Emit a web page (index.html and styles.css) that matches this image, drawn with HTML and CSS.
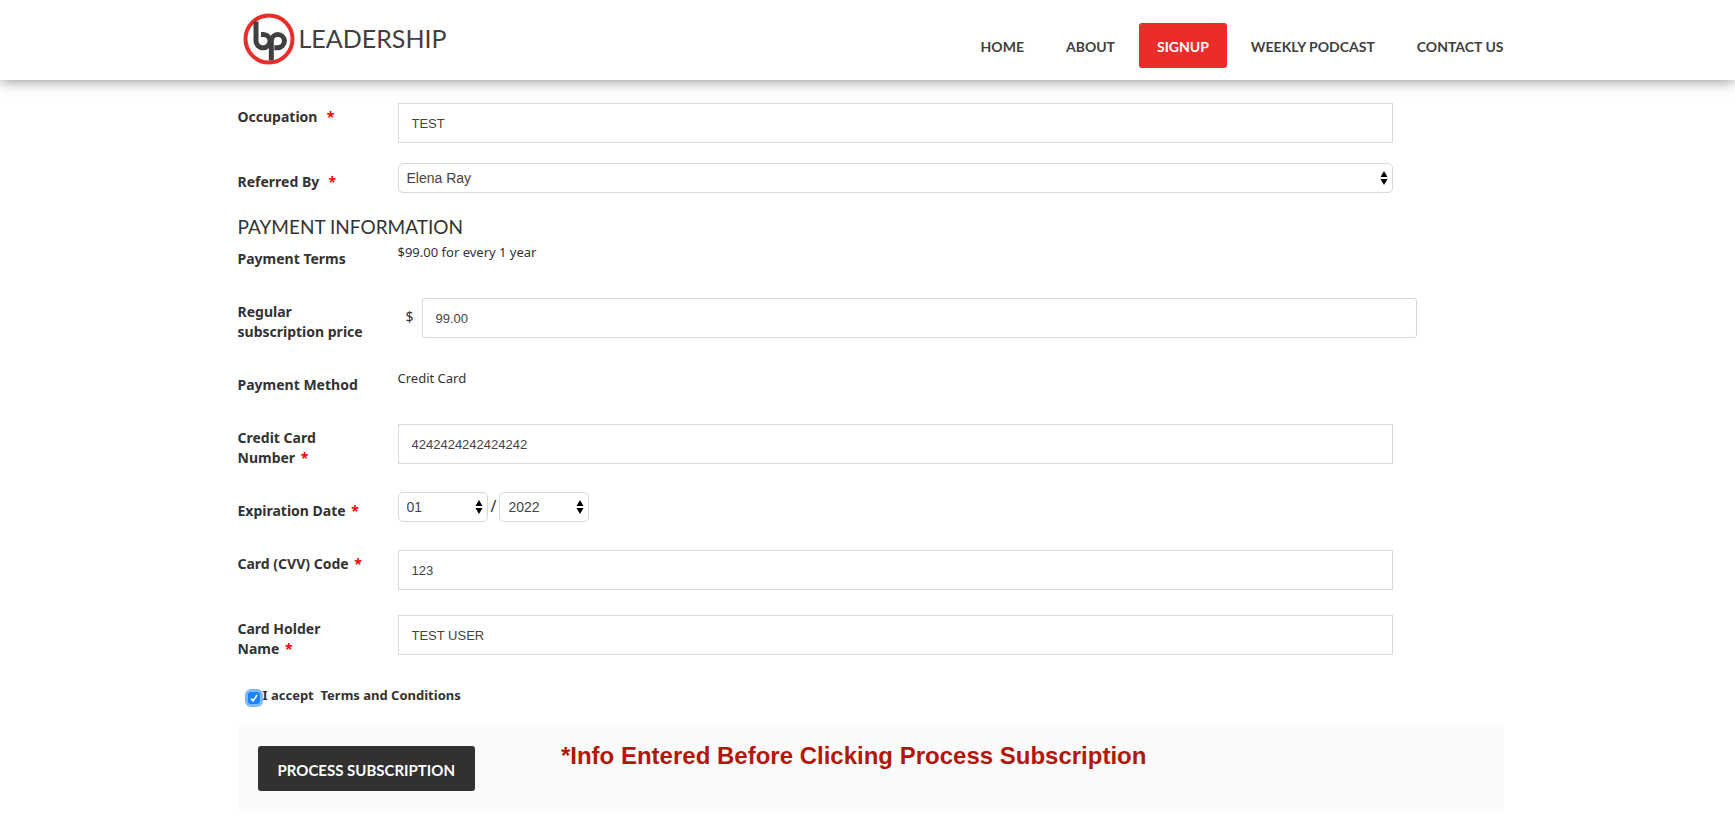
FILE: index.html
```html
<!DOCTYPE html>
<html lang="en">
<head>
    <meta charset="UTF-8">
    <meta name="viewport" content="width=device-width, initial-scale=1.0">
    <title>BP Leadership - Signup</title>
    <link rel="stylesheet" href="styles.css">
</head>
<body>

<header class="site-header">
    <div class="container header-inner">
        <a href="#" class="logo">
            <svg class="logo-mark" viewBox="0 0 52 52" width="52" height="52" aria-hidden="true">
                <circle cx="26" cy="26" r="23.5" fill="#fff" stroke="#ea2d2a" stroke-width="4"/>
                <g fill="none" stroke="#404040" stroke-width="5">
                    <path d="M13 8.500V28a6.700 6.700 0 0 0 6.700 6.700h.6a6.700 6.700 0 0 0 6.700-6.700 6.700 6.700 0 0 0-6.700-6.500h-2.300"/>
                    <path d="M28.300 47.500V28a6.500 6.500 0 0 1 6.500-6.500 6.500 6.500 0 0 1 0 13.200h-3.500"/>
                </g>
            </svg>
            <span class="logo-text">LEADERSHIP</span>
        </a>
        <nav class="main-nav">
            <a href="#">Home</a>
            <a href="#">About</a>
            <a href="#" class="active">Signup</a>
            <a href="#">Weekly Podcast</a>
            <a href="#">Contact Us</a>
        </nav>
    </div>
</header>

<main class="container">
    <form class="signup-form">
        <div class="row">
            <label class="row-label" for="occupation">Occupation&nbsp; <span class="required">*</span></label>
            <div class="row-field"><input type="text" class="text-input" id="occupation" value="TEST"></div>
        </div>
        <div class="row">
            <label class="row-label" for="referredBy">Referred By&nbsp; <span class="required">*</span></label>
            <div class="row-field select-field">
                <select class="select-input" id="referredBy">
                    <option>Elena Ray</option>
                </select>
            </div>
        </div>

        <h2 class="section-title">Payment Information</h2>

        <div class="row">
            <span class="row-label">Payment Terms</span>
            <div class="row-field value-field">$99.00 for every 1 year</div>
        </div>
        <div class="row">
            <label class="row-label" for="price">Regular subscription price</label>
            <div class="row-field price-field">
                <span class="currency">$</span>
                <input type="text" class="text-input" id="price" value="99.00">
            </div>
        </div>
        <div class="row">
            <span class="row-label">Payment Method</span>
            <div class="row-field value-field">Credit Card</div>
        </div>
        <div class="row">
            <label class="row-label" for="cardNumber">Credit Card<br>Number <span class="required">*</span></label>
            <div class="row-field"><input type="text" class="text-input" id="cardNumber" value="4242424242424242"></div>
        </div>
        <div class="row">
            <label class="row-label" for="expMonth">Expiration Date <span class="required">*</span></label>
            <div class="row-field select-field">
                <select class="select-input small" id="expMonth">
                    <option>01</option>
                </select>
                <span class="slash">/</span>
                <select class="select-input small" id="expYear" aria-label="Expiration year">
                    <option>2022</option>
                </select>
            </div>
        </div>
        <div class="row">
            <label class="row-label" for="cvv">Card (CVV) Code <span class="required">*</span></label>
            <div class="row-field"><input type="text" class="text-input" id="cvv" value="123"></div>
        </div>
        <div class="row">
            <label class="row-label" for="cardHolder">Card Holder<br>Name <span class="required">*</span></label>
            <div class="row-field"><input type="text" class="text-input" id="cardHolder" value="TEST USER"></div>
        </div>

        <div class="terms">
            <input type="checkbox" class="terms-check" id="terms" checked>
            <label for="terms">I accept&nbsp; Terms and Conditions</label>
        </div>

        <div class="form-footer">
            <button type="submit" class="submit-btn">Process Subscription</button>
            <p class="notice">*Info Entered Before Clicking Process Subscription</p>
        </div>
    </form>
</main>

</body>
</html>
```
FILE: styles.css
```css
* {
    box-sizing: border-box;
}
body {
    margin: 0;
    background-color: #fff;
    color: #333;
    font-family: "Noto Sans", sans-serif;
    font-size: 14px;
    line-height: 20px;
}
.container {
    max-width: 1280px;
    margin: 0 auto;
    padding: 0 4px 0 10px;
}

/* Header */
.site-header {
    background-color: #fff;
    box-shadow: 0 0 14px rgba(0, 0, 0, 0.5);
}
.header-inner {
    display: flex;
    justify-content: space-between;
    height: 80px;
}
.logo {
    display: flex;
    align-items: center;
    gap: 4px;
    padding: 0 0 2px 5px;
    color: #404040;
    text-decoration: none;
}
.logo-text {
    padding-bottom: 2px;
    font-family: Lato, sans-serif;
    font-size: 25px;
    line-height: 32px;
}
.main-nav {
    display: flex;
    gap: 6px;
    padding-top: 23px;
}
.main-nav a {
    height: 45px;
    padding: 0 18px;
    border-radius: 3px;
    color: #404040;
    font-family: Lato, sans-serif;
    font-size: 14px;
    font-weight: 700;
    line-height: 48px;
    text-decoration: none;
    text-transform: uppercase;
}
.main-nav a:last-child {
    padding-right: 0;
}
.main-nav a.active {
    background-color: #ea2d2a;
    color: #fff;
}

/* Form */
.signup-form {
    padding-top: 17px;
}
.row {
    display: flex;
    gap: 30px;
    padding-right: 111px;
}
.row-label {
    flex: 0 0 130px;
    padding: 10px 0 23px;
    font-weight: 700;
}
.required {
    margin-left: 2px;
    color: #f00;
}
.row-field {
    flex: 1;
    padding: 6px 0 19px;
}
.select-field {
    display: flex;
    gap: 3px;
    padding-top: 1px;
}
.value-field {
    padding-top: 3px;
    font-size: 13px;
}
.price-field {
    display: flex;
    margin-right: -24px;
}
.currency {
    flex: 0 0 24px;
    padding: 9px 0 0 8px;
}
.text-input {
    display: block;
    width: 100%;
    height: 40px;
    padding: 0 13px;
    border: 1px solid #d9d9d9;
    background-color: #fff;
    color: #444;
    font-family: "Liberation Sans", Arial, sans-serif;
    font-size: 13px;
}
.price-field .text-input {
    flex: 1;
    border-radius: 3px;
}
.select-input {
    appearance: none;
    width: 100%;
    height: 30px;
    padding: 0 20px 0 8px;
    border: 1px solid #d9d9d9;
    border-radius: 5px;
    background: #fff url("data:image/svg+xml,%3Csvg xmlns='http://www.w3.org/2000/svg' width='8' height='14'%3E%3Cpath d='M4 0l3.500 6h-7zM4 14l3.500-6h-7z'/%3E%3C/svg%3E") no-repeat right 4px center;
    color: #444;
    font-family: "Liberation Sans", Arial, sans-serif;
    font-size: 14px;
}
.select-input.small {
    width: 90px;
}
.slash {
    padding-top: 4px;
    font-size: 16px;
}
.section-title {
    margin: 0;
    font-family: Lato, sans-serif;
    font-size: 19px;
    font-weight: 400;
    line-height: 24px;
    text-transform: uppercase;
}

/* Terms */
.terms {
    display: flex;
    height: 45px;
    padding: 3px 0 0 9px;
    font-size: 13px;
    font-weight: 700;
}
.terms-check {
    appearance: none;
    width: 12px;
    height: 12px;
    margin: 7px 3px 0 1px;
    border-radius: 3px;
    background: #1a82fb url("data:image/svg+xml,%3Csvg xmlns='http://www.w3.org/2000/svg' width='12' height='12'%3E%3Cpath d='M3 6.500l2 2.500 4-6' fill='none' stroke='white' stroke-width='1.600'/%3E%3C/svg%3E") no-repeat center;
    box-shadow: 0 0 0 3px #80b9f8;
}

/* Footer bar */
.form-footer {
    display: flex;
    align-items: flex-start;
    gap: 86px;
    min-height: 84px;
    padding: 19px 20px;
    background-color: #fafafa;
}
.submit-btn {
    height: 45px;
    padding: 3px 20px 0;
    border: none;
    border-radius: 3px;
    background-color: #333130;
    color: #fff;
    font-family: Lato, sans-serif;
    font-size: 15px;
    font-weight: 700;
    text-transform: uppercase;
    cursor: pointer;
}
.notice {
    margin: 0;
    color: #b3170a;
    font-family: "Liberation Sans", Arial, sans-serif;
    font-size: 24px;
    font-weight: 700;
}
```
